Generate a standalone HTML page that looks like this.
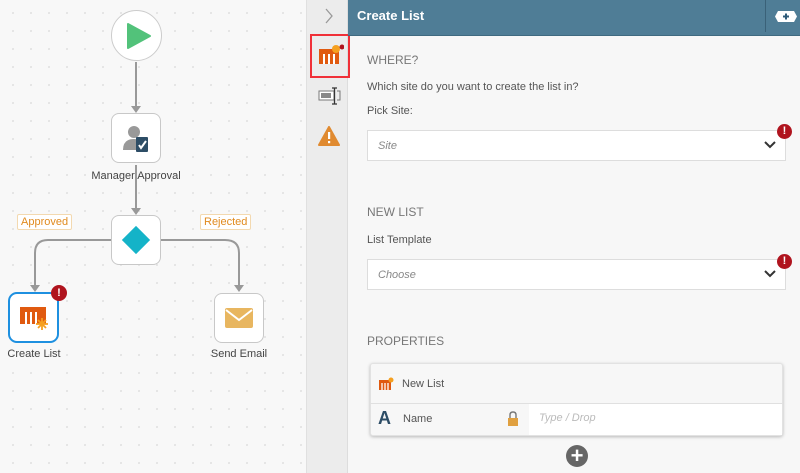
<!DOCTYPE html>
<html><head><style>
*{margin:0;padding:0;box-sizing:border-box}
body{width:800px;height:473px;overflow:hidden;font-family:"Liberation Sans",sans-serif;background:#f7f7f7;position:relative}
.a{position:absolute}
.canvas{left:0;top:0;width:306px;height:473px;background-color:#f8f8f8;background-image:radial-gradient(#d9d9d9 0.7px,transparent 1px);background-size:18px 18px;background-position:4px 4px}
.node{width:50px;height:50px;border:1px solid #c8c8c8;border-radius:8px;background:#fff}
.lbl{font-size:11px;color:#444;text-align:center}
.tag{font-size:11px;color:#e08a1e;border:1px solid #f3d9b0;background:#fff;padding:1px 3px;border-radius:2px}
.t{font-size:11px;color:#555}
.h{font-size:12px;color:#777}
.sel{left:367px;width:419px;height:31px;background:#fff;border:1px solid #ddd;font-size:11px;font-style:italic;color:#888;padding:9px 10px}
.err{width:15px;height:15px;border-radius:50%;background:#b0141e;color:#fff;font-weight:bold;font-size:11px;text-align:center;line-height:15px}
</style></head><body>
<div class="a canvas"></div>
<svg class="a" style="left:0;top:0" width="306" height="473">
<g stroke="#999" stroke-width="2" fill="none">
<line x1="136" y1="62" x2="136" y2="108"/>
<line x1="136" y1="165" x2="136" y2="210"/>
<path d="M111 240 H48 Q35 240 35 253 V287"/>
<path d="M161 240 H225 Q239 240 239 253 V287"/>
</g>
<g fill="#999"><path d="M131 106 L141 106 L136 113Z"/><path d="M131 208 L141 208 L136 215Z"/><path d="M30 285 L40 285 L35 292Z"/><path d="M234 285 L244 285 L239 292Z"/></g>
</svg>
<div class="a" style="left:111px;top:10px;width:51px;height:51px;border-radius:50%;border:1px solid #ccc;background:#fff"></div>
<svg class="a" style="left:126px;top:22px" width="26" height="28"><path d="M2 2 L24 14 L2 26Z" fill="#52c27a" stroke="#52c27a" stroke-linejoin="round" stroke-width="2"/></svg>
<div class="a node" style="left:111px;top:113px"></div>
<svg class="a" style="left:120px;top:122px" width="34" height="34"><circle cx="14" cy="10" r="6" fill="#999"/><path d="M3 28 Q3 17 14 17 Q20 17 22 20 V28Z" fill="#999"/><rect x="16" y="15" width="12" height="15" rx="1" fill="#2d4d66"/><path d="M19 23 L21 26 L26 19" stroke="#fff" stroke-width="2" fill="none"/></svg>
<div class="a lbl" style="left:80px;top:170px;width:112px">Manager Approval</div>
<div class="a node" style="left:111px;top:215px"></div>
<div class="a" style="left:126px;top:230px;width:20px;height:20px;background:#14b3c8;transform:rotate(45deg)"></div>
<div class="a tag" style="left:17px;top:214px">Approved</div>
<div class="a tag" style="left:200px;top:214px">Rejected</div>
<div class="a" style="left:8px;top:292px;width:51px;height:51px;border:2px solid #1e90e0;border-radius:9px;background:#fff"></div>
<svg class="a" style="left:19px;top:303px" width="30" height="28"><rect x="1" y="4" width="26" height="17" fill="#e05a10"/><g stroke="#fff" stroke-width="2"><line x1="7" y1="9" x2="7" y2="21"/><line x1="12" y1="9" x2="12" y2="21"/><line x1="17" y1="9" x2="17" y2="21"/></g><g stroke="#f5a020" stroke-width="1.8"><line x1="23" y1="15" x2="23" y2="27"/><line x1="17" y1="21" x2="29" y2="21"/><line x1="19" y1="17" x2="27" y2="25"/><line x1="27" y1="17" x2="19" y2="25"/></g></svg>
<div class="a err" style="left:51px;top:285px;width:16px;height:16px;line-height:16px">!</div>
<div class="a lbl" style="left:0;top:348px;width:68px">Create List</div>
<div class="a node" style="left:214px;top:293px"></div>
<svg class="a" style="left:225px;top:308px" width="28" height="22"><rect x="0" y="0" width="28" height="20" rx="2" fill="#e8b660"/><path d="M1 2 L14 12 L27 2" stroke="#fff" stroke-width="2" fill="none"/></svg>
<div class="a lbl" style="left:200px;top:348px;width:78px">Send Email</div>

<div class="a" style="left:306px;top:0;width:42px;height:473px;background:#ececec;border-left:1px solid #e0e0e0;border-right:1px solid #ddd"></div>
<svg class="a" style="left:324px;top:8px" width="10" height="16"><path d="M2 1 L8 8 L2 15" stroke="#999" stroke-width="1.3" fill="none"/></svg>
<div class="a" style="left:310px;top:34px;width:40px;height:44px;border:2px solid #f03038"></div>
<svg class="a" style="left:318px;top:43px" width="26" height="24"><rect x="1" y="6" width="20" height="15" fill="#e05a10"/><g stroke="#fff" stroke-width="2"><line x1="6" y1="11" x2="6" y2="21"/><line x1="11" y1="11" x2="11" y2="21"/><line x1="16" y1="11" x2="16" y2="21"/></g><circle cx="18" cy="6" r="4" fill="#f5a020"/><circle cx="24" cy="4" r="2.5" fill="#b0141e"/></svg>
<svg class="a" style="left:318px;top:86px" width="24" height="20"><rect x="1" y="5" width="15" height="9" fill="#fff" stroke="#777"/><rect x="3" y="7" width="10" height="5" fill="#888"/><path d="M14 2 H19 M16.5 2 V18 M14 18 H19" stroke="#333" stroke-width="1.3"/><path d="M19 5 H22 V14 H19" stroke="#777" fill="none"/></svg>
<svg class="a" style="left:318px;top:126px" width="22" height="20"><path d="M11 1 L21 19 H1Z" fill="#e08a30" stroke="#e08a30" stroke-linejoin="round" stroke-width="2"/><rect x="10" y="6" width="2.2" height="7" fill="#fff"/><rect x="10" y="15" width="2.2" height="2.2" fill="#fff"/></svg>

<div class="a" style="left:348px;top:0;width:452px;height:36px;background:#4f7d96;border-bottom:1px solid #3f6a80"></div>
<div class="a" style="left:357px;top:8px;font-size:13px;color:#fff;font-weight:bold">Create List</div>
<div class="a" style="left:765px;top:0;width:1px;height:32px;background:#3a6178"></div>
<svg class="a" style="left:774px;top:10px" width="24" height="13"><path d="M4 1 H20 L23 6.5 L20 12 H4 L1 6.5Z" fill="#fff"/><path d="M12 3.5 V9.5 M9 6.5 H15" stroke="#2d5a78" stroke-width="2"/></svg>

<div class="a h" style="left:367px;top:53px">WHERE?</div>
<div class="a t" style="left:367px;top:81px">Which site do you want to create the list in?</div>
<div class="a t" style="left:367px;top:105px">Pick Site:</div>
<div class="a sel" style="top:130px">Site</div>
<div class="a err" style="left:777px;top:124px">!</div>
<svg class="a" style="left:764px;top:141px" width="12" height="8"><path d="M1 1 L6 6 L11 1" stroke="#333" stroke-width="2" fill="none"/></svg>
<div class="a h" style="left:367px;top:205px">NEW LIST</div>
<div class="a t" style="left:367px;top:234px">List Template</div>
<div class="a sel" style="top:259px">Choose</div>
<div class="a err" style="left:777px;top:254px">!</div>
<svg class="a" style="left:764px;top:270px" width="12" height="8"><path d="M1 1 L6 6 L11 1" stroke="#333" stroke-width="2" fill="none"/></svg>
<div class="a h" style="left:367px;top:334px">PROPERTIES</div>
<div class="a" style="left:370px;top:363px;width:413px;height:73px;background:#f7f7f7;border:1px solid #e2e2e2;border-radius:3px;box-shadow:0 1px 3px rgba(0,0,0,.25)"></div>
<div class="a" style="left:370px;top:403px;width:413px;height:1px;background:#e0e0e0"></div>
<div class="a" style="left:529px;top:404px;width:253px;height:31px;background:#fff"></div>
<svg class="a" style="left:378px;top:377px" width="16" height="14"><rect x="1" y="3" width="12" height="10" fill="#e05a10"/><g stroke="#fff" stroke-width="1.3"><line x1="4" y1="6" x2="4" y2="13"/><line x1="7" y1="6" x2="7" y2="13"/><line x1="10" y1="6" x2="10" y2="13"/></g><circle cx="13" cy="3" r="2.5" fill="#f5a020"/></svg>
<div class="a t" style="left:402px;top:378px">New List</div>
<div class="a" style="left:378px;top:408px;font-size:18px;font-weight:bold;color:#2d4d66">A</div>
<div class="a t" style="left:403px;top:413px">Name</div>
<svg class="a" style="left:507px;top:411px" width="12" height="16"><path d="M3 7 V4 Q3 1 6 1 Q9 1 9 4 V7" stroke="#777" stroke-width="1.4" fill="none"/><rect x="1" y="7" width="10" height="8" fill="#e0a040"/></svg>
<div class="a" style="left:539px;top:412px;font-size:11px;font-style:italic;color:#bbb">Type / Drop</div>
<div class="a" style="left:566px;top:445px;width:22px;height:22px;border-radius:50%;background:#666;color:#fff;font-size:22px;text-align:center;line-height:21px;font-weight:bold">+</div>
</body></html>
